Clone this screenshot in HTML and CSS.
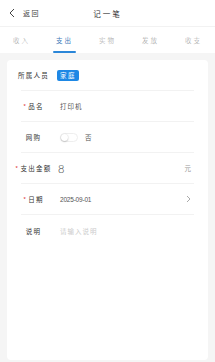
FILE: index.html
```html
<!DOCTYPE html>
<html lang="zh">
<head>
<meta charset="utf-8">
<link rel="stylesheet" href="styles.css">
</head>
<body>
<div class="page">
  <div class="header">
    <div class="back">
      <svg class="back-icon" width="6" height="10" viewBox="0 0 6 10"><path d="M5 1 L1 5 L5 9" fill="none" stroke="#444" stroke-width="1"/></svg>
      <span class="back-text">返回</span>
    </div>
    <div class="title">记一笔</div>
  </div>
  <div class="tabs">
    <div class="tab">收入</div>
    <div class="tab active">支出</div>
    <div class="tab">实物</div>
    <div class="tab">发放</div>
    <div class="tab">收支</div>
  </div>
  <div class="body">
    <div class="card">
      <div class="row">
        <div class="label">所属人员</div>
        <div class="value"><span class="tag">家庭</span></div>
      </div>
      <div class="row">
        <div class="label"><span class="req">*</span>品名</div>
        <div class="value">打印机</div>
      </div>
      <div class="row">
        <div class="label">网购</div>
        <div class="value switch-wrap"><span class="switch"><span class="knob"></span></span><span class="switch-text">否</span></div>
      </div>
      <div class="row">
        <div class="label"><span class="req">*</span>支出金额</div>
        <div class="value amount">8</div>
        <div class="suffix">元</div>
      </div>
      <div class="row">
        <div class="label"><span class="req">*</span>日期</div>
        <div class="value date">2025-09-01</div>
        <div class="suffix"><svg width="5" height="8" viewBox="0 0 5 8"><path d="M1 1 L4 4 L1 7" fill="none" stroke="#aaa" stroke-width="1"/></svg></div>
      </div>
      <div class="row last">
        <div class="label">说明</div>
        <div class="value placeholder">请输入说明</div>
      </div>
    </div>
  </div>
</div>
</body>
</html>
```
FILE: styles.css
```css
* { box-sizing: border-box; }
html, body { margin: 0; padding: 0; }
body {
  font-family: "Noto Sans CJK SC", "Noto Sans", sans-serif;
  background: #f5f5f5;
  color: #333;
  width: 215px;
  height: 362px;
  overflow: hidden;
}
.page { display: flex; flex-direction: column; height: 362px; }
.header {
  height: 27px;
  background: #fff;
  display: flex;
  align-items: center;
  position: relative;
  border-bottom: 1px solid #f2f2f2;
}
.back { display: flex; align-items: center; padding-left: 9px; }
.back-icon { display: block; }
.back-text { font-size: 7px; margin-left: 8px; letter-spacing: 1.5px; color: #444; }
.title {
  position: absolute;
  left: 0; right: 0;
  text-align: center;
  font-size: 7.5px;
  letter-spacing: 2px;
  color: #333;
  pointer-events: none;
}
.tabs {
  height: 26px;
  background: #fff;
  display: flex;
}
.tab {
  flex: 1;
  display: flex;
  align-items: center;
  justify-content: center;
  font-size: 6.5px;
  letter-spacing: 2px;
  color: #999;
  font-weight: 300;
  position: relative;
}
.tab.active { color: #3d78b8; font-weight: 400; }
.tab.active::after {
  content: "";
  position: absolute;
  left: 10px; right: 10px;
  bottom: 0;
  height: 2px;
  border-radius: 1px;
  background: #2a86d8;
}
.body { flex: 1; padding: 7px 7px 2px; }
.card {
  background: #fff;
  border-radius: 4px;
  height: 300px;
  padding: 0 14px;
}
.row {
  height: 31px;
  display: flex;
  align-items: center;
  border-bottom: 1px solid #f2f2f2;
}
.row.last { border-bottom: none; }
.label {
  flex: 0 0 39px;
  margin-left: -7px;
  font-size: 6.5px;
  letter-spacing: 1.3px;
  color: #333;
  white-space: nowrap;
  display: flex;
  justify-content: center;
  align-items: center;
}
.req { color: #e03a3a; font-size: 6px; margin-right: 1px; }
.value {
  flex: 1;
  margin-left: 7px;
  font-size: 6.5px;
  letter-spacing: 1px;
  color: #555;
  display: flex;
  align-items: center;
}
.tag {
  display: inline-block;
  background: #1e88e5;
  color: #fff;
  font-size: 6.5px;
  padding: 1px 3px;
  border-radius: 2px;
  letter-spacing: 1.5px;
  line-height: 9px;
  margin-left: -3px;
}
.switch {
  width: 18px;
  height: 9px;
  border-radius: 5px;
  border: 1px solid #eee;
  background: #fff;
  position: relative;
  display: inline-block;
}
.knob {
  position: absolute;
  left: 0; top: 0;
  width: 7px; height: 7px;
  border-radius: 50%;
  background: #fff;
  box-shadow: 0 0.5px 1.5px rgba(0,0,0,0.35);
}
.switch-text { margin-left: 7px; }
.amount { font-size: 11px; color: #333; margin-left: 5px; font-family: Lato, sans-serif; font-weight: 300; }
.date { font-family: "Liberation Sans", sans-serif; letter-spacing: -0.2px; color: #555; }
.placeholder { color: #ccc; }
.suffix { font-size: 6.5px; color: #999; padding-right: 3px; display: flex; align-items: center; }
```
